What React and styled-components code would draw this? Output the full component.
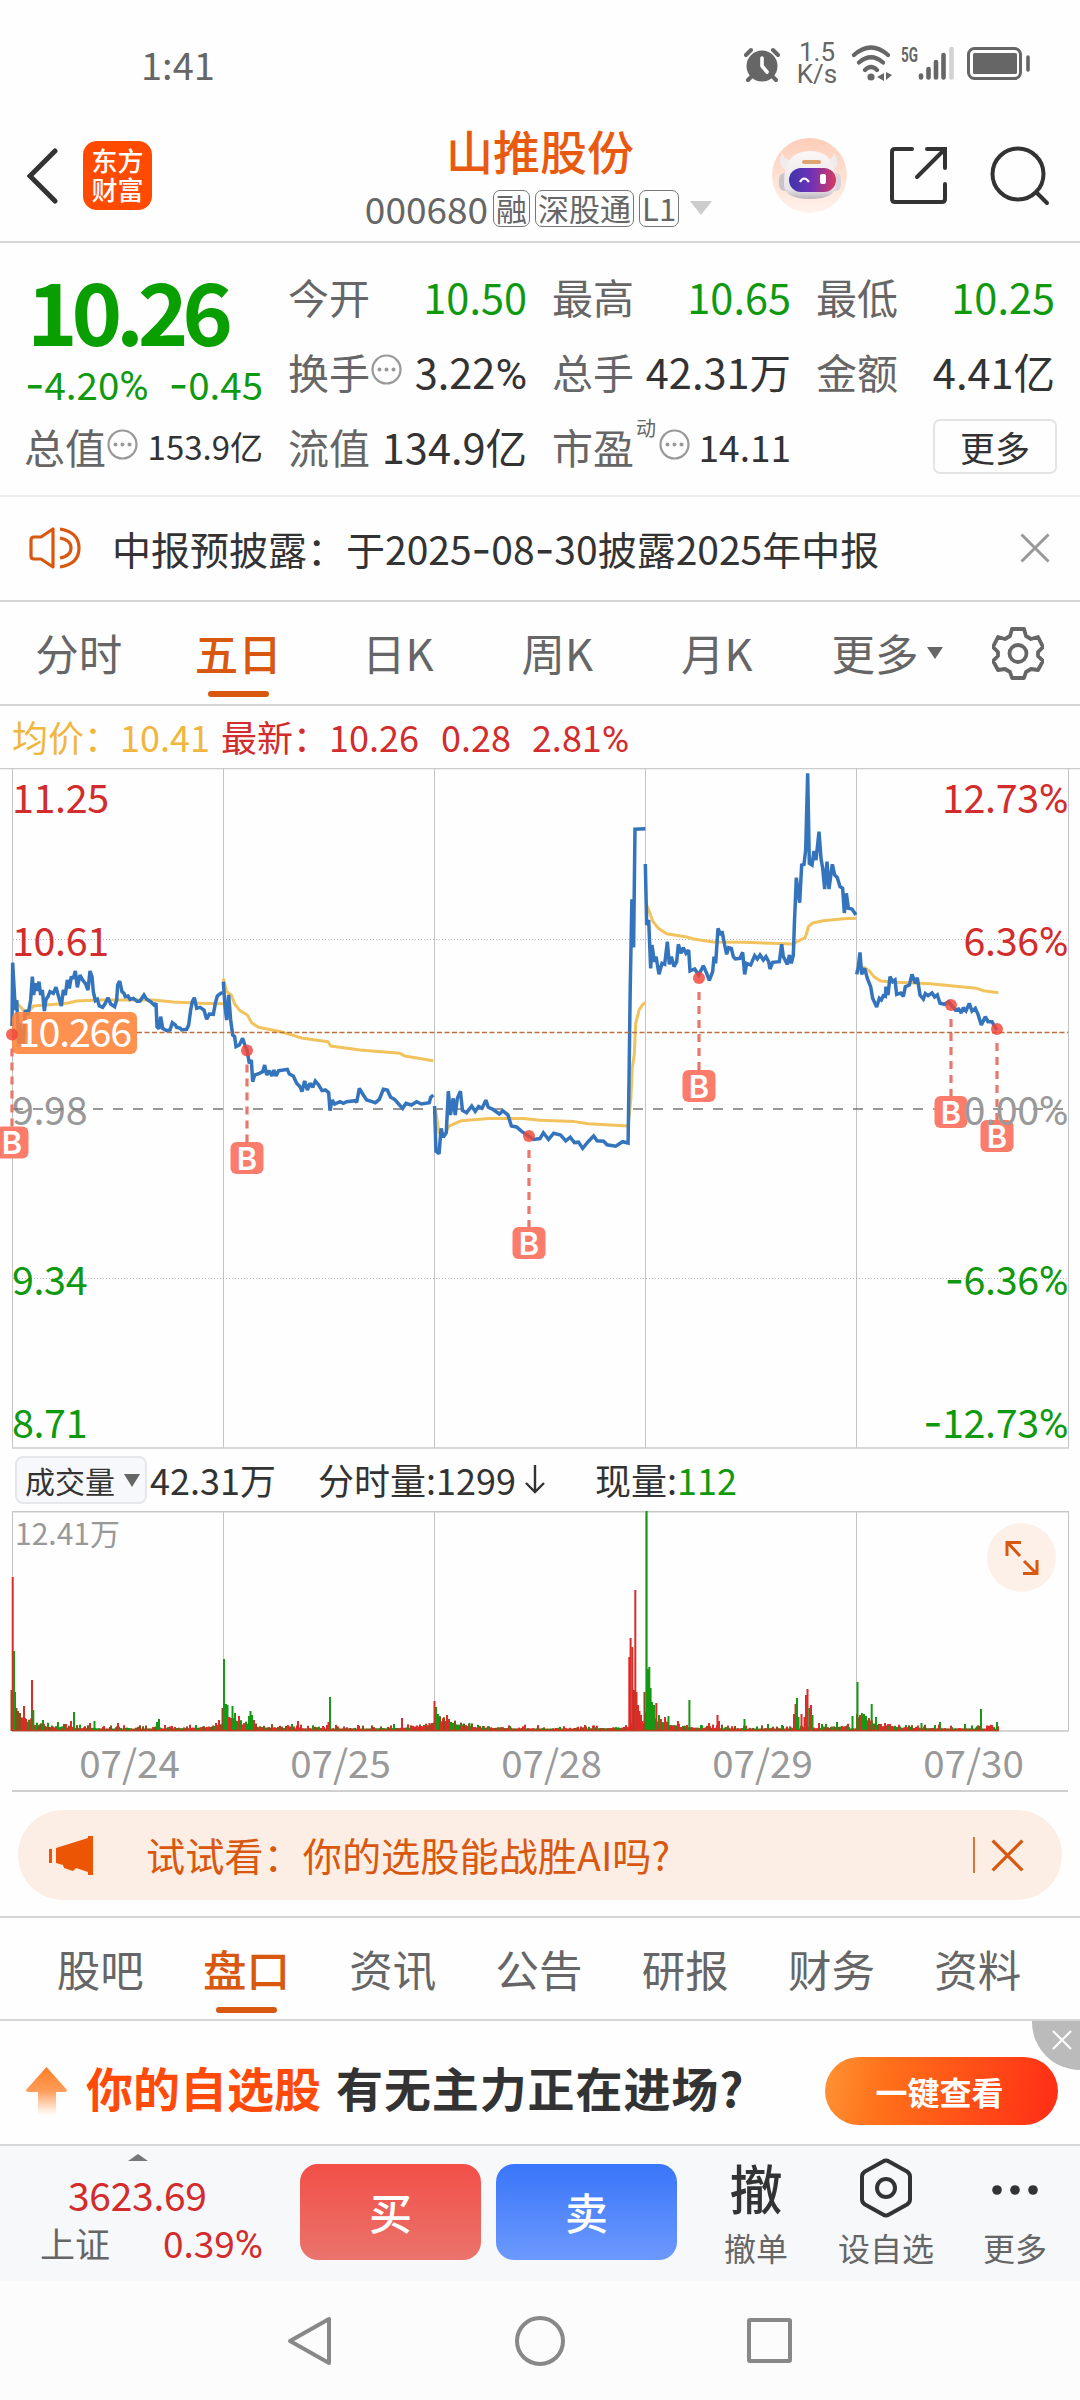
import styled, { createGlobalStyle, css } from "styled-components"

const orange = '#d9580f';
const red = '#d22c2c';
const green = '#0f990f';
const dark = '#333';
const gray = '#666';
const lightGray = '#999';
const line = '#d6d6d6';

const GlobalStyle = createGlobalStyle`
    * { box-sizing: border-box; }
    body {
        margin: 0;
        background: #fefefe;
        color: ${dark};
        font-family: "Noto Sans CJK SC", sans-serif;
    }
    svg { display: block; flex: none; }
    button { font: inherit; padding: 0; border: 0; background: none; color: inherit; }
`

const Screen = styled.div`
    width: 1080px;
    height: 2400px;
    overflow: hidden;
    display: flex;
    flex-direction: column;
`

/* ---------- numbers ---------- */

const Percent = styled.span`
    font-family: Roboto, sans-serif;
    font-size: 1.04em;
    line-height: 0;
`

const Dash = styled.span`
    font-family: Inter, sans-serif;
    font-size: 1.1em;
    line-height: 0;
`

// percent sign and hyphen are set in families whose widths suit the digits
function Num({ children }) {
    return String(children).split(/([%-])/).map((part, i) => {
        if (part === '%') return <Percent key={i}>%</Percent>
        if (part === '-') return <Dash key={i}>-</Dash>
        return part
    })
}

/* ---------- status bar ---------- */

const StatusBar = styled.div`
    height: 110px;
    padding: 20px 50px 0 141px;
    display: flex;
    align-items: center;
    color: ${gray};
`

const Clock = styled.span`
    flex: 1;
    font-size: 38px;
    line-height: 40px;
    padding-bottom: 2px;
`

const Speed = styled.div`
    width: 56px;
    margin: 0 5px 4px 9px;
    font-family: Roboto, sans-serif;
    font-size: 26px;
    line-height: 22px;
    text-align: center;
`

const StatusIcons = () => (
    <svg width="180" height="40" viewBox="0 0 180 40">
        <g fill="none" stroke={gray} strokeWidth="4.2" strokeLinecap="round">
            <path d="M4 10 Q21 -5 38 10M9 17.500 Q21 7 33 17.500M15 25 Q21 19 27 25" />
        </g>
        <circle cx="21" cy="32" r="3.6" fill={gray} />
        <path d="M34 28v8l-7-4zM36 27v8l6-5z" fill={gray} />
        <text x="51" y="16.500" fontFamily="Roboto" fontWeight="700" fontSize="20" textLength="17" lengthAdjust="spacingAndGlyphs" fill={gray}>5G</text>
        <g stroke={gray} strokeWidth="4.6" strokeLinecap="round">
            <path d="M71 30.5v2M78.500 24v8.500M86 17v15.500M93.500 10v22.500" />
            <path d="M101.500 4v28.500" stroke="#d2d2d2" />
        </g>
        <rect x="118.500" y="3.500" width="52" height="30" rx="6" fill="none" stroke={gray} strokeWidth="3" />
        <rect x="123" y="8" width="44" height="21" rx="1.500" fill={gray} />
        <path d="M178 12v13" stroke={gray} strokeWidth="3.600" strokeLinecap="round" />
    </svg>
)

const Alarm = () => (
    <svg width="36" height="38" viewBox="0 0 36 38">
        <circle cx="18" cy="20" r="15.500" fill={gray} />
        <path d="M2 9l5-5M34 9l-5-5M4 34l5-5M32 34l-5-5" stroke={gray} strokeWidth="4" strokeLinecap="round" />
        <path d="M18 12v8l5 6" fill="none" stroke="#fff" strokeWidth="3.600" strokeLinecap="round" strokeLinejoin="round" />
    </svg>
)

/* ---------- header ---------- */

const Header = styled.header`
    height: 133px;
    padding: 0 30px 0 27px;
    display: grid;
    grid-template-columns: 300px 1fr 300px;
    border-bottom: 2px solid ${line};
`

const HeaderSide = styled.div`
    display: flex;
    align-items: center;
    justify-content: ${props => props.right ? 'flex-end' : 'flex-start'};
    gap: ${props => props.right ? '42px' : '25px'};
`

const Logo = styled.div`
    width: 69px;
    height: 69px;
    border-radius: 14px;
    padding-top: 4px;
    background: #ff4a00;
    color: #fff;
    font-size: 26px;
    font-weight: 500;
    line-height: 29px;
    text-align: center;
`

const TitleBlock = styled.div`
    display: flex;
    flex-direction: column;
    align-items: center;
    white-space: nowrap;
`

const Title = styled.h1`
    margin: 13px 0 0 3px;
    font-size: 47px;
    line-height: 54px;
    font-weight: 500;
    color: #e85a10;
`

const CodeRow = styled.div`
    display: flex;
    align-items: center;
    gap: 5px;
    margin-top: 12px;
    height: 38px;
    font-size: 37px;
    line-height: 38px;
    color: ${gray};
`

const Tag = styled.span`
    height: 37px;
    padding: 0 2px;
    border: 1.500px solid #777;
    border-radius: 7px;
    font-size: 31px;
    line-height: 33px;
`

const Caret = styled.i`
    width: 0;
    height: 0;
    margin: ${props => props.margin || '0'};
    border-left: ${props => props.size}px solid transparent;
    border-right: ${props => props.size}px solid transparent;
    ${props => props.up
        ? css`border-bottom: ${props.tall}px solid ${props.color};`
        : css`border-top: ${props.tall}px solid ${props.color};`}
`

const BackIcon = () => (
    <svg width="31" height="56" viewBox="0 0 31 56">
        <path d="M28 3L3 28l25 25" fill="none" stroke={dark} strokeWidth="5" strokeLinecap="round" />
    </svg>
)

const Robot = () => (
    <svg width="75" height="75" viewBox="0 0 75 75">
        <defs>
            <linearGradient id="halo" x1="0" y1="0" x2="0" y2="1">
                <stop offset="0" stopColor="#fdcdb8" />
                <stop offset="1" stopColor="#fff3ec" />
            </linearGradient>
            <linearGradient id="shell" x1="0" y1="0" x2="0" y2="1">
                <stop offset="0" stopColor="#fbf7f7" />
                <stop offset=".8" stopColor="#e8e3e6" />
                <stop offset="1" stopColor="#b9b4bb" />
            </linearGradient>
            <linearGradient id="visor">
                <stop offset="0" stopColor="#3c35ad" />
                <stop offset=".5" stopColor="#7631b5" />
                <stop offset="1" stopColor="#d93b5e" />
            </linearGradient>
        </defs>
        <circle cx="37.500" cy="37.500" r="37.500" fill="url(#halo)" />
        <path d="M10 15q-6 13 5 17l9-9q-11 0-14-8zM62 15q8 13-3 17l-9-9q10 0 12-8z" fill="#f1ebec" />
        <rect x="7" y="35" width="12" height="18" rx="6" fill="#c9c4ca" />
        <rect x="58" y="35" width="11" height="18" rx="5.500" fill="#dcd6da" />
        <path d="M12 44Q12 13 38 13T64 44Q66 61 38 61T12 44z" fill="url(#shell)" />
        <rect x="30" y="22" width="19" height="4" rx="2" fill="#dfa273" />
        <rect x="17" y="30" width="47" height="24" rx="12" fill="url(#visor)" />
        <path d="M28 44q4-7 9 0" fill="none" stroke="#fff" strokeWidth="2.200" />
        <rect x="48" y="36" width="6" height="10" rx="2" fill="#fff" />
    </svg>
)

const ShareIcon = () => (
    <svg width="59" height="59" viewBox="0 0 59 59" fill="none" stroke={dark} strokeWidth="4" strokeLinecap="round">
        <path d="M23 3H6Q3 3 3 6V53Q3 56 6 56H53Q56 56 56 53V38M38 3H56V22M54 5L28 31" />
    </svg>
)

const SearchIcon = () => (
    <svg width="60" height="60" viewBox="0 0 60 60" fill="none" stroke={dark} strokeWidth="4" strokeLinecap="round">
        <circle cx="28" cy="28" r="25.500" />
        <path d="M46.500 46.500L57 57" />
    </svg>
)

/* ---------- quote ---------- */

const Quote = styled.section`
    height: 254px;
    padding: 16px 25px 0;
    display: grid;
    grid-template-columns: repeat(4, 238px);
    grid-auto-rows: 75px;
    column-gap: 26px;
    border-bottom: 2px solid #ececec;
`

const PriceCell = styled.div`
    grid-row: span 2;
    color: ${green};
    white-space: nowrap;
`

const Price = styled.div`
    height: 99px;
    margin-left: 2px;
    font-size: 86px;
    line-height: 99px;
    font-weight: 700;
    color: #0a9f00;
    letter-spacing: -6.200px;
`

const Change = styled.div`
    display: flex;
    justify-content: space-between;
    font-size: 38.500px;
    line-height: 50px;
`

const Cell = styled.div`
    display: flex;
    align-items: center;
    justify-content: space-between;
    white-space: nowrap;
    line-height: 75px;
`

const Label = styled.span`
    display: flex;
    align-items: center;
    gap: 1px;
    margin-left: -1px;
    font-size: 41px;
    color: ${gray};

    svg { margin-bottom: 5px; }
`

const Sup = styled.sup`
    align-self: flex-start;
    margin: -19px 0 0 1px;
    font-size: 20px;
    width: 22px;
`

const Value = styled.span`
    font-size: ${props => props.size || 41.500}px;
    color: ${props => props.color || dark};
`

const MoreButton = styled.button`
    width: 124px;
    height: 55px;
    margin-left: auto;
    margin-right: -2px;
    border: 2px solid #e4e4e4;
    border-radius: 7px;
    font-size: 35px;
    line-height: 48px;
`

const Dots = () => (
    <svg width="31" height="31" viewBox="0 0 31 31">
        <circle cx="15.500" cy="15.500" r="14" fill="none" stroke={lightGray} strokeWidth="2.200" />
        <g fill={lightGray}>
            <circle cx="8.500" cy="15.500" r="2" />
            <circle cx="15.500" cy="15.500" r="2" />
            <circle cx="22.500" cy="15.500" r="2" />
        </g>
    </svg>
)

/* ---------- notice ---------- */

const Notice = styled.section`
    height: 105px;
    padding: 0 30px 2px 29px;
    display: flex;
    align-items: center;
    border-bottom: 2px solid ${line};
`

const NoticeText = styled.span`
    flex: 1;
    margin-left: 30px;
    font-size: 39px;
    line-height: 60px;
    white-space: nowrap;
`

const Speaker = () => (
    <svg width="53" height="44" viewBox="0 0 53 44" fill="none" stroke={orange} strokeWidth="3.200">
        <path d="M24 3v38L12 33H5q-3 0-3-3V14q0-3 3-3h7z" strokeLinejoin="round" />
        <path d="M31 12q11 2 11 10t-11 10M31 3q19 3 19 19t-19 19" />
    </svg>
)

const Cross = ({ size, color, width = 3 }) => (
    <svg width={size} height={size} viewBox="0 0 30 30">
        <path d="M1.500 1.500l27 27M28.500 1.500l-27 27" stroke={color} strokeWidth={width} />
    </svg>
)

/* ---------- tabs ---------- */

const Tabs = styled.nav`
    height: ${props => props.height || 104}px;
    padding: ${props => props.padding};
    display: flex;
    align-items: center;
    border-top: ${props => props.topLine ? `2px solid ${line}` : 'none'};
    border-bottom: 2px solid ${line};
`

const Tab = styled.button`
    position: relative;
    width: ${props => props.width}px;
    height: 102px;
    padding-right: 2px;
    font-size: 43.500px;
    line-height: 98px;
    font-weight: ${props => props.active ? 500 : 400};
    color: ${props => props.active ? orange : gray};
    white-space: nowrap;

    ${props => props.active && css`
        &::after {
            content: "";
            position: absolute;
            left: 50%;
            bottom: 7px;
            width: 61px;
            height: 6px;
            margin-left: -31px;
            border-radius: 3px;
            background: ${orange};
        }
    `}
`

const MoreTab = styled.button`
    display: flex;
    align-items: center;
    width: 160px;
    margin-left: 34px;
    font-size: 43.500px;
    line-height: 98px;
    color: ${gray};
`

const Gear = () => (
    <svg width="52" height="54" viewBox="0 0 52 54" fill="none" stroke={gray} strokeWidth="3.800">
        <path strokeLinejoin="round" d="M20 3h12l2 7 5 3 7-2 5 10-5 5v4l5 5-5 9-7-1-5 3-2 6H20l-2-6-5-3-7 1-5-9 5-5v-4l-5-5 5-10 7 2 5-3z" />
        <circle cx="26" cy="27.500" r="8.500" />
    </svg>
)

/* ---------- price chart ---------- */

const Averages = styled.div`
    height: 62px;
    padding: 0 0 2px 12px;
    display: flex;
    align-items: center;
    font-size: 36px;
    line-height: 60px;
    white-space: pre;
    color: ${red};
`

const Average = styled.span`
    width: 209px;
    color: #f0b63e;
`

const Figure = styled.span`
    margin-right: ${props => props.gap || 21}px;
`

// each session keeps its own drawing units, placed by a transform
const leftSpace = 'translate(0 132) scale(.33333)'
const midSpace = 'translate(0 -8) scale(.34435 .44643)'
const rightSpace = 'translate(630 -3) scale(.33333)'

const sessions = [
    {
        space: leftSpace,
        avg: 'M38,290 56,315 75,335 90,330 100,318 150,314 200,310 230,303 290,300 460,300 520,306 600,310 670,311',
        price: 'M36,378 38,188 46,330 50,300 56,432 60,370 66,432 70,432 76,330 84,345 92,300 97,230 101,285 106,250 112,272 117,245 122,285 127,270 133,333 138,298 144,290 150,275 160,280 168,262 176,290 184,318 190,270 196,285 202,240 208,265 214,230 220,236 226,213 232,262 240,225 248,240 256,250 264,270 270,213 276,230 280,275 286,302 292,298 298,318 308,322 316,310 324,293 332,312 344,320 350,300 353,255 359,243 366,275 372,280 376,290 384,288 390,298 400,295 412,304 420,303 432,285 440,298 452,305 462,315 468,310 471,380 477,386 482,350 488,385 500,392 510,390 517,368 526,375 530,382 540,384 545,390 560,388 566,375 572,330 577,305 583,293 590,325 600,322 612,330 620,358 628,342 640,343 646,310 652,288 662,280 670,278',
    },
    {
        space: leftSpace,
        avg: 'M670,236 680,275 694,285 704,312 720,332 742,345 755,368 775,382 850,397 905,414 984,425 992,438 1080,450 1200,460 1214,468 1300,482',
        price: 'M670,245 675,320 680,360 686,285 692,360 698,405 704,410 708,440 718,435 728,415 736,440 741,450 748,490 754,480 758,545 764,525 778,520 788,515 794,495 800,525 808,512 816,528 822,510 828,528 836,512 850,510 862,508 868,522 880,528 890,550 900,560 906,575 914,543 922,570 930,550 938,562 946,543 956,555 966,572 976,570 986,578 990,632 996,600 1004,612 1020,605 1030,610 1040,605 1066,602 1070,607 1078,565 1090,585 1100,600 1114,604 1126,608 1138,598 1150,568 1162,570 1172,592 1184,598 1196,612 1208,625 1218,610 1234,615 1250,605 1264,612 1288,608 1292,592 1300,585',
    },
    {
        space: midSpace,
        avg: 'M1264,780 1275,835 1290,842 1304,820 1340,808 1420,803 1520,803 1568,807 1668,810 1708,815 1824,820 1832,760 1836,690 1842,660 1846,590 1856,560 1866,548 1874,543',
        price: 'M1262,775 1266,876 1275,882 1281,825 1287,845 1296,835 1302,742 1308,795 1316,758 1322,795 1328,758 1337,742 1343,785 1355,790 1370,775 1380,787 1390,776 1400,780 1411,762 1418,778 1430,782 1450,793 1460,786 1475,795 1485,820 1500,822 1515,832 1536,843 1550,850 1568,848 1578,835 1593,850 1608,836 1628,840 1643,853 1656,845 1668,857 1680,856 1692,870 1708,855 1724,842 1734,853 1753,854 1763,862 1788,865 1808,855 1824,858 1827,700 1830,520 1835,312 1840,420 1844,155 1874,154',
    },
    {
        space: rightSpace,
        avg: 'M50,420 58,440 68,468 85,490 110,506 170,516 190,522 250,531 340,532 490,537 505,528 525,518 530,505 535,485 548,474 580,467 640,461 678,460',
        price: 'M46,297 50,480 56,465 62,610 66,540 73,590 78,575 87,628 96,595 104,598 112,530 118,598 124,575 132,605 140,590 145,538 153,565 160,548 168,565 176,555 180,618 194,612 206,630 220,602 230,625 238,646 248,620 252,575 257,595 264,490 272,510 276,498 284,540 290,568 296,548 304,550 310,575 316,582 330,580 338,562 344,628 350,595 362,600 374,572 382,582 390,570 400,585 408,575 416,590 420,612 428,592 448,590 455,538 460,575 472,598 478,570 484,595 490,570 493,480 499,338 504,380 509,413 515,300 522,298 527,255 533,25 538,295 546,300 552,258 558,285 567,200 573,280 578,310 584,372 591,290 597,372 607,298 614,330 622,338 630,365 638,370 643,444 649,385 655,430 666,432 678,450',
    },
    {
        space: rightSpace,
        avg: 'M680,605 704,608 718,618 732,635 752,648 800,652 900,656 1040,670 1060,677 1105,683',
        price: 'M680,628 685,605 690,562 695,628 704,610 712,640 722,665 728,700 740,726 748,700 754,705 760,692 766,694 768,665 774,690 780,635 788,650 795,645 800,688 812,684 820,694 826,665 838,660 846,628 856,655 862,638 870,690 880,702 886,686 894,692 906,684 914,696 922,690 930,715 944,718 956,710 963,720 976,735 986,732 994,744 1000,728 1008,738 1018,715 1026,738 1036,730 1044,748 1054,780 1066,755 1074,770 1086,770 1100,795',
    },
]

const buys = [
    { x: 12, dot: 266.500, badge: 374.500 },
    { x: 247, dot: 282.500, badge: 390 },
    { x: 529, dot: 368, badge: 475 },
    { x: 699, dot: 210, badge: 318 },
    { x: 951, dot: 237, badge: 344 },
    { x: 997, dot: 261, badge: 368 },
]

const levels = [
    { y: 45, price: '11.25', pct: '12.73%', color: red },
    { y: 188, price: '10.61', pct: '6.36%', color: red },
    { y: 357, price: '9.98', pct: '0.00%', color: lightGray },
    { y: 527, price: '9.34', pct: '-6.36%', color: green },
    { y: 670, price: '8.71', pct: '-12.73%', color: green },
]

const dayLines = [12.5, 223.5, 434.5, 645.5, 856.5, 1068.5]

const AxisText = styled.text`
    font-family: "Noto Sans CJK SC", sans-serif;
    font-size: 39.500px;
    letter-spacing: ${props => props.tight ? -1.3 : -.4}px;

    .pct { font-family: Roboto, sans-serif; font-size: 40.500px; }
    .dash { font-family: Inter, sans-serif; font-size: 42px; }
`

const BadgeText = styled.text`
    font-family: Inter, sans-serif;
    font-size: 31px;
    font-weight: 600;
    text-anchor: middle;
    fill: #fff;
`

const PriceChart = () => (
    <svg width="1080" height="681" viewBox="0 0 1080 681">
        <path d="M0 .5H1080M12 680H1069" stroke="#ccc" strokeWidth="1.500" />
        {dayLines.map(x => <path key={x} d={`M${x} 0V680`} stroke="#c4c4c4" />)}
        <path d="M13 171.500H1068M13 510.500H1068" stroke="#bbb" strokeDasharray="1 2" />
        {levels.map(l => (
            <AxisText key={l.price} x="12" y={l.y} fill={l.color}>{l.price}</AxisText>
        ))}
        <path d="M13 341H1068" stroke="#777" strokeWidth="1.600" strokeDasharray="10 10" />
        <g fill="none" strokeLinejoin="round">
            {sessions.map((s, i) => (
                <g key={i} transform={s.space}>
                    <path d={s.avg} stroke="#f2c25c" strokeWidth="3" vectorEffect="non-scaling-stroke" />
                    <path d={s.price} stroke="#3474bd" strokeWidth="3.500" strokeLinejoin="miter" strokeMiterlimit="2" vectorEffect="non-scaling-stroke" />
                </g>
            ))}
        </g>
        <path d="M137 264.500H1068" stroke="#c0703c" strokeWidth="1.400" strokeDasharray="5 2.500" />
        <rect x="12" y="244" width="125" height="42" rx="6" fill="#ff8238" fillOpacity=".88" />
        <AxisText tight x="18" y="278.500" fill="#fff">10.266</AxisText>
        {buys.map(b => (
            <g key={b.x}>
                <path d={`M${b.x} ${b.dot + 14}V${b.badge - 16}`} stroke="#e8786b" strokeWidth="3.200" strokeDasharray="8 6" />
                <circle cx={b.x} cy={b.dot} r="6" fill="#f04438" fillOpacity=".82" />
                <rect x={b.x - 16.5} y={b.badge - 16} width="33" height="32" rx="6" fill="#fb7c6b" />
                <BadgeText x={b.x} y={b.badge + 11.5}>B</BadgeText>
            </g>
        ))}
        {levels.map(l => (
            <AxisText key={l.pct} x="1068" y={l.y} textAnchor="end" fill={l.color}>
                {l.pct.startsWith('-') && <tspan className="dash">-</tspan>}
                {l.pct.replace(/[-%]/g, '')}
                <tspan className="pct">%</tspan>
            </AxisText>
        ))}
    </svg>
)

/* ---------- volume ---------- */

const VolumeBar = styled.div`
    height: 62px;
    padding: 0 15px 2px;
    display: flex;
    align-items: center;
    font-size: 36px;
    line-height: 60px;
    white-space: nowrap;
`

const Select = styled.button`
    display: flex;
    align-items: center;
    width: 132px;
    height: 48px;
    margin: 2px 3px 0 0;
    padding-left: 8px;
    border: 2px solid #e6e7ea;
    border-radius: 8px;
    background: #f7f8fb;
    font-size: 30px;
    line-height: 42px;
    align-content: start;
`

const VolumeItem = styled.span`
    width: ${props => props.width}px;
    display: flex;
    align-items: center;
`

const Green = styled.span`
    color: ${green};
`

const DownArrow = styled.svg.attrs({ width: 22, height: 32, viewBox: "0 0 22 32" })`
    margin-left: 8px;
`

const VolumePanel = styled.div`
    position: relative;
    height: 221px;
`

const Expand = styled.button`
    position: absolute;
    left: 987px;
    top: 12px;
    width: 69px;
    height: 69px;
    border-radius: 50%;
    background: #fdf0e8;
    display: grid;
    place-items: center;
`

const spikes = [
    [11.5, 41, 'b'], [12.7, 154, 'r'], [14, 80, 'g'], [15, 39, 'g'], [16.5, 23, 'b'], [18, 20, 'b'], [20, 18, 'b'], [22, 13, 'r'], [24, 25, 'r'], [26, 12, 'r'],
    [32, 51, 'r'], [33.3, 21, 'g'], [43, 11, 'g'], [58, 9, 'g'], [66, 7, 'r'], [71, 10, 'r'], [74, 19, 'g'], [90, 8, 'r'], [94.500, 10, 'g'], [118, 8, 'r'],
    [157, 9, 'g'], [159, 12, 'g'], [165, 5, 'r'], [190, 6, 'r'], [196, 6, 'g'], [216, 8, 'r'], [219, 11, 'r'], [222.500, 23, 'b'], [224, 72, 'g'], [226, 27, 'g'], [227.500, 26, 'g'],
    [229, 14, 'r'], [232.500, 25, 'g'], [235, 18, 'g'], [239, 15, 'r'], [249, 15, 'g'], [250.500, 20, 'g'], [252, 16, 'g'], [254, 11, 'r'], [288, 6, 'r'], [292, 7, 'g'], [298, 10, 'r'],
    [328.500, 9, 'r'], [330, 34, 'g'], [358, 6, 'r'], [394, 7, 'g'], [402, 13, 'r'], [421, 5, 'r'], [429.500, 8, 'r'], [434.500, 30, 'r'], [436, 24, 'g'], [438, 17, 'g'],
    [447, 16, 'r'], [449, 12, 'r'], [451, 9, 'g'], [469.500, 8, 'g'], [510, 5, 'g'], [585, 6, 'r'],
    [629.300, 74, 'r'], [630.600, 93, 'r'], [632.300, 84, 'r'], [634, 41, 'b'], [635.300, 141, 'r'], [636.500, 39, 'r'], [638, 26, 'r'], [639.500, 20, 'r'], [641, 16, 'r'], [642.500, 10, 'r'],
    [644.500, 39, 'b'], [646.600, 220, 'g'], [648, 62, 'g'], [649.300, 64, 'g'], [650.600, 43, 'g'], [652, 29, 'g'], [654, 26, 'g'], [656.300, 28, 'r'], [659, 16, 'g'], [661, 12, 'r'],
    [665, 14, 'r'], [668.500, 15, 'g'], [678, 10, 'r'], [689.400, 31, 'g'], [709, 8, 'r'], [717.500, 16, 'r'], [719, 10, 'r'], [744.500, 12, 'g'], [768, 7, 'g'], [782, 6, 'g'],
    [794, 17, 'r'], [795.500, 27, 'r'], [797, 33, 'g'], [798.500, 14, 'g'], [801.500, 17, 'r'], [804.500, 14, 'r'], [806, 36, 'r'], [807.500, 42, 'r'], [809.300, 23, 'g'], [811, 26, 'r'], [812.500, 16, 'g'], [819, 8, 'r'], [822, 7, 'g'], [837, 9, 'g'],
    [852.500, 15, 'g'], [857.500, 49, 'g'], [860, 16, 'r'], [862, 18, 'g'], [864, 17, 'g'], [866, 15, 'g'], [869, 13, 'r'], [871.700, 27, 'g'], [876, 14, 'g'], [881, 7, 'r'], [890, 7, 'r'],
    [921.500, 8, 'g'], [940, 9, 'g'], [965, 7, 'g'], [981, 22, 'g'], [992, 6, 'r'], [997, 9, 'g'],
]

// small trades: a low random floor that swells at the open and before the close
function makeFloor() {
    const bars = []
    let seed = 11
    const rand = () => {
        seed = (seed * 16807) % 2147483647
        return seed / 2147483647
    }
    for (let x = 12; x < 999; x += 1) {
        const t = (x - 12.500) % 211
        const open = 15 * Math.exp(-t / 20)
        const close = x < 850 ? 5 * Math.exp(-(211 - t) / 18) : 0
        const h = 2.200 + (open + close) * (.5 + rand() * .6) + Math.pow(rand(), 5) * 4
        bars.push([x, h, rand() < .45 ? 'r' : rand() < .5 ? 'b' : 'g'])
    }
    return bars
}

const barColors = { r: '#dc2c2a', g: '#149914', b: '#86501a' }

const VolumeChart = () => (
    <svg width="1080" height="221" viewBox="0 0 1080 221">
        <path d="M12 .7H1069M12 220H1069" stroke="#c8c8c8" strokeWidth="1.400" />
        {dayLines.map(x => <path key={x} d={`M${x} 0V220`} stroke="#c4c4c4" />)}
        {makeFloor().concat(spikes).map(([x, h, c], i) => (
            <rect key={i} x={x - 1} y={220 - h} width="2" height={h} fill={barColors[c]} />
        ))}
        <path d="M12 219.500H999" stroke="#c33b1e" strokeWidth="1.500" />
        <text x="15" y="33.500" fontSize="30" fill={lightGray} fontFamily="Noto Sans CJK SC">12.41万</text>
    </svg>
)

const Dates = styled.div`
    height: 60px;
    margin: 0 12px;
    padding-left: 12px;
    display: grid;
    grid-template-columns: repeat(5, 211px);
    border-bottom: 2px solid #cfcfcf;
    font-size: 38.500px;
    line-height: 58px;
    text-align: center;
    color: ${lightGray};
`

/* ---------- promo ---------- */

const Promo = styled.section`
    height: 90px;
    margin: 18px 18px 16px;
    padding: 0 38px 0 30px;
    display: flex;
    align-items: center;
    border-radius: 45px;
    background: #fceee5;
    color: ${orange};
`

const PromoText = styled.span`
    flex: 1;
    margin: 0 0 3px 51px;
    font-size: 39.200px;
    line-height: 80px;
    white-space: nowrap;
`

const Divider = styled.i`
    width: 2px;
    height: 36px;
    margin-right: 16px;
    background: #d3763f;
`

const Horn = () => (
    <svg width="47" height="42" viewBox="0 0 47 42" fill="#ec5503">
        <path d="M1 15h3v14H1zM8 14L40 4V2h5v39h-5v-3l-12-4-3 3-9-3-1-3-7-2z" />
    </svg>
)

/* ---------- ad ---------- */

const AdBar = styled.section`
    position: relative;
    height: 123px;
    padding: 16px 22px 0 26px;
    display: flex;
    align-items: center;
    overflow: hidden;
    white-space: nowrap;
`

const AdText = styled.span`
    margin: 0 0 8px ${props => props.left}px;
    font-size: 47px;
    line-height: 90px;
    font-weight: 700;
    letter-spacing: ${props => props.spacing || 0}px;
    color: ${props => props.color};
`

const AdButton = styled.button`
    width: 233px;
    height: 68px;
    margin: 0 0 0 auto;
    padding-right: 4px;
    border-radius: 34px;
    background: linear-gradient(100deg, #ff9335 0%, #ff711a 25%, #ff3115 95%);
    color: #fff;
    font-size: 32px;
    font-weight: 700;
    line-height: 62px;
`

const AdClose = styled.button`
    position: absolute;
    right: 0;
    top: 0;
    width: 48px;
    height: 49px;
    padding: 0 0 11px 20px;
    border-bottom-left-radius: 48px;
    background: #bbb;
`

const UpArrow = () => (
    <svg width="41" height="48" viewBox="0 0 41 48">
        <defs>
            <linearGradient id="up" x1="0" y1="0" x2="0" y2="1">
                <stop offset="0" stopColor="#ff7d25" />
                <stop offset=".5" stopColor="#ff9d59" />
                <stop offset="1" stopColor="#fff" />
            </linearGradient>
        </defs>
        <path d="M20.500 0L41 23q0 2-2 2h-9v23H12V25H2q-2 0-2-2z" fill="url(#up)" />
    </svg>
)

/* ---------- trade bar ---------- */

const TradeBar = styled.footer`
    height: 137px;
    display: flex;
    border-top: 2px solid ${line};
    background: #f7f8fa;
`

const IndexBlock = styled.div`
    width: 300px;
    padding: 8px 37px 0 40px;
    display: flex;
    flex-direction: column;
    color: ${red};
`

const IndexValue = styled.div`
    margin: 6px 0 0 28px;
    font-size: 39px;
    line-height: 54px;
    letter-spacing: -.3px;
`

const IndexRow = styled.div`
    display: flex;
    justify-content: space-between;
    font-size: 37px;
    line-height: 43px;
`

const IndexName = styled.span`
    font-size: 35px;
    color: ${gray};
`

const TradeButton = styled.button`
    width: 181px;
    height: 96px;
    margin: 18px 15px 0 0;
    border-radius: 18px;
    background: ${props => props.buy
        ? 'linear-gradient(#f24f47, #ea746c)'
        : 'linear-gradient(#3a76fa, #6c99fd)'};
    color: #fff;
    font-size: 43px;
    font-weight: 500;
    line-height: 92px;
    padding-bottom: 2px;
`

const Action = styled.button`
    width: ${props => props.width}px;
    margin-left: ${props => props.left || 0}px;
    display: flex;
    flex-direction: column;
    align-items: center;
    font-size: 32px;
    line-height: 40px;
    color: ${gray};
`

const ActionIcon = styled.span`
    height: 81px;
    padding-top: ${props => props.top || 0}px;
    font-size: 53px;
    line-height: 82px;
    font-weight: 500;
    color: ${dark};
`

const Hexagon = () => (
    <svg width="54" height="60" viewBox="0 0 54 60" fill="none" stroke={dark} strokeWidth="4">
        <path strokeLinejoin="round" d="M24 3.500q3-2 6 0l18 10q3 2 3 5v23q0 3-3 5l-18 10q-3 2-6 0l-18-10q-3-2-3-5v-23q0-3 3-5z" />
        <circle cx="27" cy="30" r="9" />
    </svg>
)

const Ellipsis = () => (
    <svg width="48" height="12" viewBox="0 0 48 12" fill={dark}>
        <circle cx="6" cy="6" r="4.800" />
        <circle cx="24" cy="6" r="4.800" />
        <circle cx="42" cy="6" r="4.800" />
    </svg>
)

/* ---------- system navigation ---------- */

const SystemNav = styled.div`
    height: 119px;
    padding: 0 286px 0 286px;
    display: flex;
    align-items: center;
    justify-content: space-between;
    background: #fcfcfc;
`

const NavIcon = ({ children }) => (
    <svg width="52" height="52" viewBox="0 0 52 52" fill="none" stroke="#888" strokeWidth="4" strokeLinejoin="round">
        {children}
    </svg>
)

const sectionTabs = ['股吧', '盘口', '资讯', '公告', '研报', '财务', '资料']
const periodTabs = ['分时', '五日', '日K', '周K', '月K']

export default function App() {
    return (
        <Screen>
            <GlobalStyle />
            <StatusBar>
                <Clock>1:41</Clock>
                <Alarm />
                <Speed>1.5<br />K/s</Speed>
                <StatusIcons />
            </StatusBar>

            <Header>
                <HeaderSide>
                    <BackIcon />
                    <Logo>东方<br />财富</Logo>
                </HeaderSide>
                <TitleBlock>
                    <Title>山推股份</Title>
                    <CodeRow>
                        000680
                        <Tag>融</Tag>
                        <Tag>深股通</Tag>
                        <Tag>L1</Tag>
                        <Caret size={11} tall={14} color="#ccc" margin="0 0 0 6px" />
                    </CodeRow>
                </TitleBlock>
                <HeaderSide right>
                    <Robot />
                    <ShareIcon />
                    <SearchIcon />
                </HeaderSide>
            </Header>

            <Quote>
                <PriceCell>
                    <Price>10.26</Price>
                    <Change>
                        <span><Num>-4.20%</Num></span>
                        <span><Num>-0.45</Num></span>
                    </Change>
                </PriceCell>
                <Cell><Label>今开</Label><Value color={green}>10.50</Value></Cell>
                <Cell><Label>最高</Label><Value color={green}>10.65</Value></Cell>
                <Cell><Label>最低</Label><Value color={green}>10.25</Value></Cell>
                <Cell><Label>换手<Dots /></Label><Value><Num>3.22%</Num></Value></Cell>
                <Cell><Label>总手</Label><Value>42.31万</Value></Cell>
                <Cell><Label>金额</Label><Value>4.41亿</Value></Cell>
                <Cell><Label>总值<Dots /></Label><Value size={33}>153.9亿</Value></Cell>
                <Cell><Label>流值</Label><Value>134.9亿</Value></Cell>
                <Cell><Label>市盈<Sup>动</Sup><Dots /></Label><Value size={37}>14.11</Value></Cell>
                <Cell><MoreButton>更多</MoreButton></Cell>
            </Quote>

            <Notice>
                <Speaker />
                <NoticeText><Num>中报预披露：于2025-08-30披露2025年中报</Num></NoticeText>
                <Cross size={30} color={lightGray} />
            </Notice>

            <Tabs padding="0 34px 0 0">
                {periodTabs.map(t => <Tab key={t} width={159.5} active={t === '五日'}>{t}</Tab>)}
                <MoreTab>
                    更多
                    <Caret size={8} tall={12} color={gray} margin="0 0 0 8px" />
                </MoreTab>
                <Gear />
            </Tabs>

            <Averages>
                <Average>均价：10.41</Average>
                <Figure gap={22}>最新：10.26</Figure>
                <Figure>0.28</Figure>
                <span><Num>2.81%</Num></span>
            </Averages>
            <PriceChart />

            <VolumeBar>
                <Select>
                    成交量
                    <Caret size={8} tall={13} color={gray} margin="0 0 0 9px" />
                </Select>
                <VolumeItem width={168}>42.31万</VolumeItem>
                <VolumeItem width={277}>
                    分时量:1299
                    <DownArrow>
                        <path d="M11 2v27M2 20l9 9 9-9" fill="none" stroke={dark} strokeWidth="2.400" />
                    </DownArrow>
                </VolumeItem>
                <VolumeItem>现量:<Green>112</Green></VolumeItem>
            </VolumeBar>
            <VolumePanel>
                <VolumeChart />
                <Expand>
                    <svg width="34" height="36" viewBox="0 0 34 36" fill="none" stroke={orange} strokeWidth="3">
                        <path d="M2 16V2.500H16M3 3l12 13M32 20v13.500H18M31 33L19 21" />
                    </svg>
                </Expand>
            </VolumePanel>
            <Dates>
                {['07/24', '07/25', '07/28', '07/29', '07/30'].map(d => <span key={d}>{d}</span>)}
            </Dates>

            <Promo>
                <Horn />
                <PromoText>试试看：你的选股能战胜AI吗?</PromoText>
                <Divider />
                <Cross size={33} color={orange} />
            </Promo>

            <Tabs topLine height={105} padding="0 28px">
                {sectionTabs.map(t => <Tab key={t} width={146.4} active={t === '盘口'}>{t}</Tab>)}
            </Tabs>

            <AdBar>
                <UpArrow />
                <AdText left={19} color="#ff4a0a">你的自选股</AdText>
                <AdText left={15} spacing={.9} color={dark}>有无主力正在进场?</AdText>
                <AdButton>一键查看</AdButton>
                <AdClose><Cross size={20} color="#fff" /></AdClose>
            </AdBar>

            <TradeBar>
                <IndexBlock>
                    <Caret up size={10} tall={7} color="#777" margin="0 0 0 88px" />
                    <IndexValue>3623.69</IndexValue>
                    <IndexRow>
                        <IndexName>上证</IndexName>
                        <span><Num>0.39%</Num></span>
                    </IndexRow>
                </IndexBlock>
                <TradeButton buy>买</TradeButton>
                <TradeButton>卖</TradeButton>
                <Action width={100} left={14}>
                    <ActionIcon>撤</ActionIcon>
                    撤单
                </Action>
                <Action width={130} left={15}>
                    <ActionIcon top={12}><Hexagon /></ActionIcon>
                    设自选
                </Action>
                <Action width={100} left={14}>
                    <ActionIcon top={38}><Ellipsis /></ActionIcon>
                    更多
                </Action>
            </TradeBar>

            <SystemNav>
                <NavIcon><path d="M43 4v44L4 26z" /></NavIcon>
                <NavIcon><circle cx="26" cy="26" r="23" /></NavIcon>
                <NavIcon><rect x="7" y="5" width="41" height="41" rx="1" /></NavIcon>
            </SystemNav>
        </Screen>
    )
}
